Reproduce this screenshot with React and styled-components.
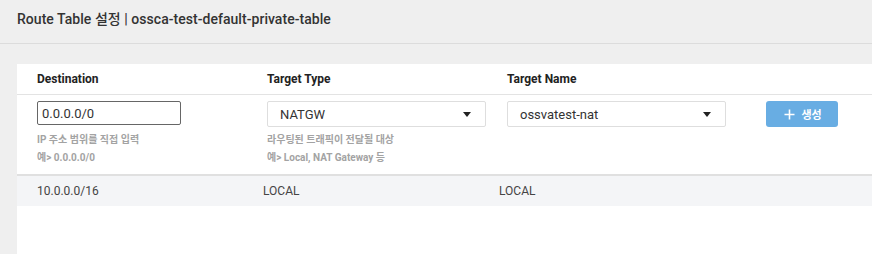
import React, { useState } from 'react';
import styled, { createGlobalStyle } from 'styled-components';

const GlobalStyle = createGlobalStyle`
  html, body {
    margin: 0;
    padding: 0;
    background: #efefef;
    font-family: Roboto, "Noto Sans CJK KR", sans-serif;
  }
  * { box-sizing: border-box; }
`;

const Page = styled.div`
  width: 872px;
  height: 254px;
  overflow: hidden;
  background: #efefef;
`;

const TitleBar = styled.div`
  height: 44px;
  padding: 0 17px;
  display: flex;
  align-items: center;
  padding-bottom: 8px;
  border-bottom: 1px solid #dcdcdc;
`;

const Title = styled.h1`
  margin: 0;
  font-size: 14px;
  font-weight: 500;
  color: #333;
  letter-spacing: 0.04px;
`;

const Body = styled.div`
  padding: 20px 0 0 17px;
`;

const Card = styled.div`
  background: #fff;
  height: 200px;
`;

const Row = styled.div`
  display: grid;
  grid-template-columns: ${(p) => p.$cols};
  padding-left: 20px;
`;

const HeadRow = styled(Row)`
  height: 31px;
  align-items: center;
  border-bottom: 1px solid #e3e3e3;
`;

const HeadCell = styled.div`
  font-size: 12px;
  font-weight: 700;
  color: #222;
`;

const FormRow = styled(Row)`
  height: 81px;
  padding-top: 6px;
  border-bottom: 2px solid #e0e0e0;
`;

const Field = styled.div`
  display: flex;
  flex-direction: column;
`;

const TextInput = styled.input`
  width: 144px;
  height: 24px;
  border: 1px solid #666;
  border-radius: 2px;
  padding: 0 4px;
  font-family: Roboto, sans-serif;
  font-size: 13px;
  color: #333;
  outline: none;
`;

const SelectBox = styled.div`
  width: 219px;
  height: 26px;
  border: 1px solid #dedede;
  border-radius: 2px;
  display: flex;
  align-items: center;
  justify-content: space-between;
  padding: 0 14px 0 ${(p) => p.$pad}px;
  font-size: ${(p) => p.$size}px;
  color: #333;
`;

const Caret = styled.span`
  width: 0;
  height: 0;
  border-left: 4px solid transparent;
  border-right: 4px solid transparent;
  border-top: 5px solid #222;
`;

const Help = styled.div`
  margin-top: ${(p) => p.$top}px;
  font-size: 10px;
  font-weight: 700;
  color: #a3a3a3;
  line-height: 12px;
`;

const AddButton = styled.button`
  width: 72px;
  height: 26px;
  border: none;
  border-radius: 3px;
  background: #68ade3;
  color: #fff;
  display: flex;
  align-items: center;
  justify-content: center;
  gap: 6px;
  font-family: Roboto, "Noto Sans CJK KR", sans-serif;
  font-size: 11px;
  font-weight: 700;
  padding: 0 0 0 2px;
`;

const DataRow = styled(Row)`
  height: 30px;
  align-items: center;
  background: #f4f5f7;
  font-size: 12px;
  color: #444;
`;

const FORM_COLS = '230px 240px 259px 80px';
const DATA_COLS = '226px 236px 200px';

const App = () => {
  const [dest, setDest] = useState('0.0.0.0/0');
  const routes = [{ id: 1, dest: '10.0.0.0/16', type: 'LOCAL', name: 'LOCAL' }];

  return (
    <Page>
      <GlobalStyle />
      <TitleBar>
        <Title>Route Table 설정 | ossca-test-default-private-table</Title>
      </TitleBar>
      <Body>
        <Card>
          <HeadRow $cols={FORM_COLS}>
            <HeadCell>Destination</HeadCell>
            <HeadCell>Target Type</HeadCell>
            <HeadCell>Target Name</HeadCell>
            <div />
          </HeadRow>
          <FormRow $cols={FORM_COLS}>
            <Field>
              <TextInput value={dest} onChange={(e) => setDest(e.target.value)} />
              <Help $top={9}>IP 주소 범위를 직접 입력</Help>
              <Help $top={6}>예&gt; 0.0.0.0/0</Help>
            </Field>
            <Field>
              <SelectBox $pad={12} $size={13}>
                NATGW
                <Caret />
              </SelectBox>
              <Help $top={7}>라우팅된 트래픽이 전달될 대상</Help>
              <Help $top={6}>예&gt; Local, NAT Gateway 등</Help>
            </Field>
            <Field>
              <SelectBox $pad={12} $size={13}>
                ossvatest-nat
                <Caret />
              </SelectBox>
            </Field>
            <Field>
              <AddButton>
                <svg width="11" height="11" viewBox="0 0 11 11">
                  <path d="M5.5 0.5v10M0.5 5.5h10" stroke="#fff" strokeWidth="1.6" />
                </svg>
                생성
              </AddButton>
            </Field>
          </FormRow>
          {routes.map((r) => (
            <DataRow key={r.id} $cols={DATA_COLS}>
              <div>{r.dest}</div>
              <div>{r.type}</div>
              <div>{r.name}</div>
            </DataRow>
          ))}
        </Card>
      </Body>
    </Page>
  );
};

export default App;
